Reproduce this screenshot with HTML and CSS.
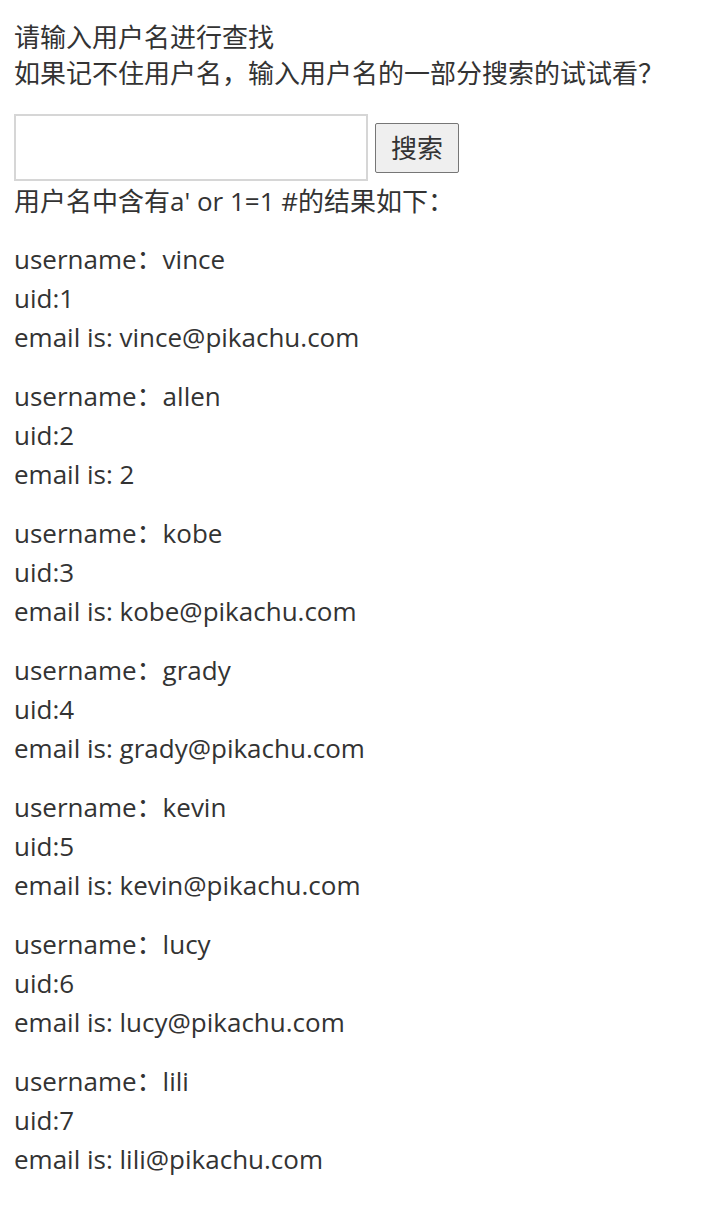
FILE: index.html
```html
<!DOCTYPE html>
<html lang="zh-CN">
<head>
<meta charset="utf-8">
<title>搜索</title>
<link rel="stylesheet" href="styles.css">
</head>
<body>
<div class="page">
  <div class="intro">
    <p>请输入用户名进行查找</p>
    <p>如果记不住用户名，输入用户名的一部分搜索的试试看？</p>
  </div>
  <form class="search" onsubmit="return false">
    <input class="search-input" type="text" name="name">
    <button class="search-btn" type="submit">搜索</button>
  </form>
  <p class="summary">用户名中含有a' or 1=1 #的结果如下：</p>
  <div class="results">
    <p class="result">username：vince<br>uid:1<br>email is: vince@pikachu.com</p>
    <p class="result">username：allen<br>uid:2<br>email is: 2</p>
    <p class="result">username：kobe<br>uid:3<br>email is: kobe@pikachu.com</p>
    <p class="result">username：grady<br>uid:4<br>email is: grady@pikachu.com</p>
    <p class="result">username：kevin<br>uid:5<br>email is: kevin@pikachu.com</p>
    <p class="result">username：lucy<br>uid:6<br>email is: lucy@pikachu.com</p>
    <p class="result">username：lili<br>uid:7<br>email is: lili@pikachu.com</p>
  </div>
</div>
</body>
</html>
```
FILE: styles.css
```css
html, body {
  margin: 0;
  padding: 0;
  background: #fff;
}
body {
  font-family: "Open Sans", "Noto Sans CJK SC", sans-serif;
  font-size: 26px;
  color: #333;
}
.page {
  padding: 19px 14px 40px 14px;
}
p {
  margin: 0;
}
.intro p {
  line-height: 36px;
}
.search {
  display: flex;
  align-items: center;
  gap: 7px;
  margin-top: 23px;
}
.search-input {
  box-sizing: border-box;
  width: 354px;
  height: 67px;
  border: 2px solid #d6d6d6;
  margin: 0;
  padding: 0 8px;
  font: inherit;
  outline: none;
}
.search-btn {
  box-sizing: border-box;
  width: 84px;
  height: 50px;
  margin: 0;
  padding: 0;
  border: 1px solid #767676;
  border-radius: 2px;
  background: #efefef;
  color: #333;
  font-family: "Open Sans", "Noto Sans CJK SC", sans-serif;
  font-size: 26px;
  line-height: 1;
}
.summary {
  line-height: 39px;
  margin-top: 1px;
}
.results {
  display: flex;
  flex-direction: column;
  gap: 20px;
  margin-top: 19px;
}
.result {
  line-height: 39px;
}
```
